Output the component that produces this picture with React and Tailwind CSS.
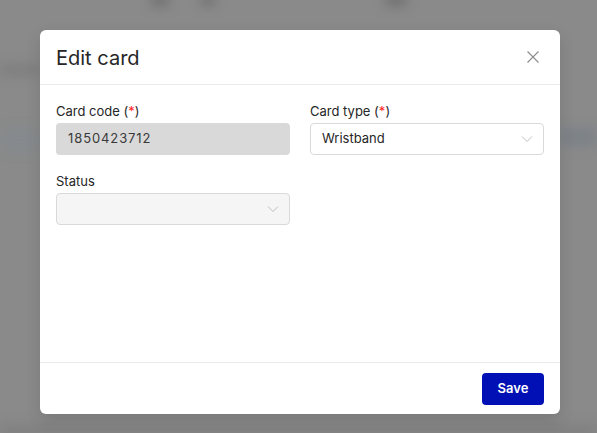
import React from 'react';

function Chevron() {
  return (
    <svg width="12" height="12" viewBox="0 0 12 12" fill="none" className="text-[#bfbfbf]">
      <path d="M1 3.5L6 8.5L11 3.5" stroke="currentColor" strokeWidth="1" />
    </svg>
  );
}

function Label({ children, required }) {
  return (
    <div className="text-[13px] leading-[16px] text-[#262626] mb-[4px]">
      {children}
      {required && (
        <span>
          {' ('}
          <span className="text-[#ff1f1f]">*</span>
          {')'}
        </span>
      )}
    </div>
  );
}

export default function App() {
  return (
    <div
      className="relative w-full h-[433px] overflow-hidden bg-[#8a8a8a]"
      style={{ fontFamily: 'Inter, "Noto Sans", sans-serif' }}
    >
      {/* blurred page behind the dialog */}
      <div className="absolute inset-0 blur-[6px]">
        <div className="absolute left-[150px] top-[-6px] w-[20px] h-[12px] rounded-full bg-[#6f6f6f]" />
        <div className="absolute left-[200px] top-[-6px] w-[16px] h-[12px] rounded-full bg-[#727272]" />
        <div className="absolute left-[385px] top-[-6px] w-[22px] h-[12px] rounded-full bg-[#6f6f6f]" />
        <div className="absolute left-[0px] top-[66px] w-[40px] h-[8px] bg-[#7a7a7a]" />
        <div className="absolute left-[0px] top-[130px] w-[40px] h-[20px] bg-[#858a8e]" />
        <div className="absolute left-[560px] top-[128px] w-[37px] h-[18px] bg-[#7c8288]" />
        <div className="absolute left-[0px] top-[425px] w-[597px] h-[10px] bg-[#7e7e7e]" />
      </div>

      <div className="relative ml-[40px] mt-[30px] w-[520px] h-[384px] bg-white rounded-[6px] shadow-[0_6px_16px_rgba(0,0,0,0.12)] flex flex-col">
        <div className="h-[55px] flex items-center justify-between px-[16px] border-b border-[#ebebeb]">
          <div className="text-[20px] text-[#262626] leading-[24px] pt-[1px]">Edit card</div>
          <svg width="14" height="14" viewBox="0 0 14 14" className="mr-[4px]">
            <path d="M1.5 1.5L12.5 12.5M12.5 1.5L1.5 12.5" stroke="#8c8c8c" strokeWidth="1.1" />
          </svg>
        </div>

        <div className="flex-1 px-[16px] pt-[18px]">
          <div className="grid grid-cols-2 gap-x-[20px] gap-y-[18px]">
            <div>
              <Label required>Card code</Label>
              <div className="h-[32px] rounded-[4px] bg-[#d9d9d9] flex items-center px-[12px] text-[13px] tracking-[0.9px] text-[#3a3a3a]">
                1850423712
              </div>
            </div>
            <div>
              <Label required>Card type</Label>
              <div className="h-[32px] rounded-[4px] border border-[#d9d9d9] bg-white flex items-center justify-between pl-[11px] pr-[10px] text-[13px] text-[#262626]">
                <span>Wristband</span>
                <Chevron />
              </div>
            </div>
            <div>
              <Label>Status</Label>
              <div className="h-[32px] rounded-[4px] border border-[#d9d9d9] bg-[#f5f5f5] flex items-center justify-end pr-[10px]">
                <Chevron />
              </div>
            </div>
          </div>
        </div>

        <div className="h-[52px] border-t border-[#ebebeb] flex items-center justify-end px-[16px]">
          <button className="h-[32px] w-[62px] rounded-[4px] bg-[#0010b4] text-white text-[13px] font-semibold">
            Save
          </button>
        </div>
      </div>
    </div>
  );
}
